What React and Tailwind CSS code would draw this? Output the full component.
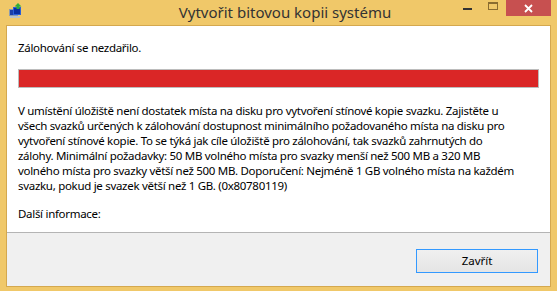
import React from 'react';

const lines = [
  'V umístění úložiště není dostatek místa na disku pro vytvoření stínové kopie svazku. Zajistěte u',
  'všech svazků určených k zálohování dostupnost minimálního požadovaného místa na disku pro',
  'vytvoření stínové kopie. To se týká jak cíle úložiště pro zálohování, tak svazků zahrnutých do',
  'zálohy. Minimální požadavky: 50 MB volného místa pro svazky menší než 500 MB a 320 MB',
  'volného místa pro svazky větší než 500 MB. Doporučení: Nejméně 1 GB volného místa na každém',
  'svazku, pokud je svazek větší než 1 GB. (0x80780119)',
];

const BackupIcon = () => (
  <svg width="16" height="16" viewBox="0 0 16 16">
    <rect x="1" y="6" width="9" height="7" fill="#8a9bb0" />
    <rect x="2" y="7" width="7" height="5" fill="#1c3fa8" />
    <rect x="5" y="4" width="8" height="8" fill="#2b5fd9" />
    <rect x="6" y="5" width="6" height="6" fill="#0a2fa0" />
    <rect x="2" y="13" width="10" height="2" fill="#b8c2cc" />
    <path d="M10 0 L13.5 3.5 L11.5 3.5 L11.5 6 L8.5 6 L8.5 3.5 L6.5 3.5 Z" fill="#2fae3a" />
  </svg>
);

export default function App() {
  return (
    <div
      className="w-[557px] h-[291px] bg-[#f0c869] flex flex-col overflow-hidden"
      style={{ fontFamily: '"Segoe UI", "Noto Sans", sans-serif' }}
    >
      {/* title bar */}
      <div className="h-[25px] flex items-start">
        <div className="w-[30px] h-[20px] flex items-center justify-center pl-[1px] pt-[2px]">
          <BackupIcon />
        </div>
        <div className="flex-1 text-center text-[15px] leading-[24px] text-[#333333] pl-[86px]">
          Vytvořit bitovou kopii systému
        </div>
        <div className="flex items-start">
          <div className="w-[26px] h-[16px] flex items-center justify-center">
            <div className="w-[9px] h-[2px] bg-[#333333] mt-[1px]" />
          </div>
          <div className="w-[26px] h-[16px] flex items-start justify-center pt-[2px]">
            <div className="w-[10px] h-[8px] border border-[#8a6c30] border-t-2" />
          </div>
          <div className="w-[45px] h-[16px] bg-[#c75050] flex items-center justify-center">
            <svg width="9" height="9" viewBox="0 0 9 9">
              <path d="M1 1 L8 8 M8 1 L1 8" stroke="#ffffff" strokeWidth="1.8" />
            </svg>
          </div>
          <div className="w-[6px]" />
        </div>
      </div>

      {/* client area */}
      <div className="mx-[6px] mb-[4px] flex-1 border border-[#d4a84e] flex flex-col">
        <div className="flex-1 bg-white px-[11px] pt-[14px] text-[11.5px] tracking-[-0.3px] leading-[15px] text-black">
          <div>Zálohování se nezdařilo.</div>
          <div className="mt-[14px] h-[19px] border border-[#bcbcbc] bg-[#da2626]" />
          <div className="mt-[15px]">
            {lines.map((l, i) => (
              <div key={i} className="whitespace-nowrap">{l}</div>
            ))}
          </div>
          <div className="mt-[13px]">Další informace:</div>
        </div>
        <div className="h-[54px] bg-[#f0f0f0] border-t border-[#b4b4b4] flex justify-end items-start pt-[16px] pr-[12px]">
          <button className="w-[122px] h-[24px] border border-[#3399ff] bg-gradient-to-b from-[#f0f0f0] to-[#e5e5e5] text-[11.5px] text-black">
            Zavřít
          </button>
        </div>
      </div>
    </div>
  );
}
